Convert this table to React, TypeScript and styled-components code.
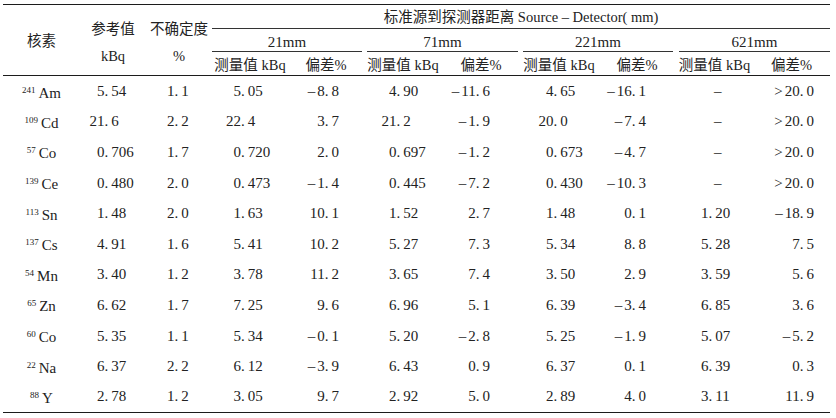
import React from 'react';
import styled, { createGlobalStyle } from 'styled-components';

const GlobalStyle = createGlobalStyle`
  html, body {
    margin: 0;
    padding: 0;
    background: #ffffff;
  }
  body {
    font-family: 'Liberation Serif', 'Noto Sans CJK SC', serif;
    color: #222222;
  }
`;

type Pair = [string, string];

interface Row {
  mass: string;
  el: string;
  ref: string;
  unc: string;
  values: Pair[];
}

const groups = ['21mm', '71mm', '221mm', '621mm'];

// where the decimal point sits inside each measured column
const measuredPoint = [29, 32.5, 33.5, 32.5];
// right padding of each deviation column
const biasPad = [25, 30, 30, 16];
// gaps of the short rules under each distance
const groupGap: Pair[] = [
  ['0', '2px'],
  ['3px', '2px'],
  ['3px', '3px'],
  ['3px', '0'],
];

const rows: Row[] = [
  { mass: '241', el: 'Am', ref: '5.54', unc: '1.1', values: [['5.05', '–8.8'], ['4.90', '–11.6'], ['4.65', '–16.1'], ['–', '>20.0']] },
  { mass: '109', el: 'Cd', ref: '21.6', unc: '2.2', values: [['22.4', '3.7'], ['21.2', '–1.9'], ['20.0', '–7.4'], ['–', '>20.0']] },
  { mass: '57', el: 'Co', ref: '0.706', unc: '1.7', values: [['0.720', '2.0'], ['0.697', '–1.2'], ['0.673', '–4.7'], ['–', '>20.0']] },
  { mass: '139', el: 'Ce', ref: '0.480', unc: '2.0', values: [['0.473', '–1.4'], ['0.445', '–7.2'], ['0.430', '–10.3'], ['–', '>20.0']] },
  { mass: '113', el: 'Sn', ref: '1.48', unc: '2.0', values: [['1.63', '10.1'], ['1.52', '2.7'], ['1.48', '0.1'], ['1.20', '–18.9']] },
  { mass: '137', el: 'Cs', ref: '4.91', unc: '1.6', values: [['5.41', '10.2'], ['5.27', '7.3'], ['5.34', '8.8'], ['5.28', '7.5']] },
  { mass: '54', el: 'Mn', ref: '3.40', unc: '1.2', values: [['3.78', '11.2'], ['3.65', '7.4'], ['3.50', '2.9'], ['3.59', '5.6']] },
  { mass: '65', el: 'Zn', ref: '6.62', unc: '1.7', values: [['7.25', '9.6'], ['6.96', '5.1'], ['6.39', '–3.4'], ['6.85', '3.6']] },
  { mass: '60', el: 'Co', ref: '5.35', unc: '1.1', values: [['5.34', '–0.1'], ['5.20', '–2.8'], ['5.25', '–1.9'], ['5.07', '–5.2']] },
  { mass: '22', el: 'Na', ref: '6.37', unc: '2.2', values: [['6.12', '–3.9'], ['6.43', '0.9'], ['6.37', '0.1'], ['6.39', '0.3']] },
  { mass: '88', el: 'Y', ref: '2.78', unc: '1.2', values: [['3.05', '9.7'], ['2.92', '5.0'], ['2.89', '4.0'], ['3.11', '11.9']] },
];

const colWidths = [77, 66, 66, 76, 76, 78, 78, 78, 78, 77, 77];

function Num({ value }: { value: string }) {
  const signed = value[0] === '–' || value[0] === '>';
  const body = signed ? value.slice(1) : value;
  const [int, frac] = body.split('.');
  return (
    <>
      {signed && <Sign>{value[0]}</Sign>}
      {int}
      {frac !== undefined && (
        <>
          <Point>.</Point>
          {frac}
        </>
      )}
    </>
  );
}

function Decimal({ value, point }: { value: string; point: number }) {
  if (value === '–') {
    return <Dash>–</Dash>;
  }
  const [int, frac] = value.split('.');
  return (
    <>
      <IntPart $width={point}>{int}</IntPart>
      <Point>.</Point>
      {frac}
    </>
  );
}

export default function App() {
  return (
    <>
      <GlobalStyle />
      <Page>
        <Table>
          <colgroup>
            {colWidths.map((w, i) => (
              <col key={i} style={{ width: w }} />
            ))}
          </colgroup>
          <thead>
            <tr>
              <HeadCell rowSpan={3} $pad={2}>
                核素
              </HeadCell>
              <HeadCell rowSpan={3} $pad={6}>
                参考值
                <br />
                kBq
              </HeadCell>
              <HeadCell rowSpan={3} $pad={6}>
                不确定度
                <br />%
              </HeadCell>
              <SpanHead colSpan={8}>
                标准源到探测器距离 Source – Detector( mm)
              </SpanHead>
            </tr>
            <tr>
              {groups.map((g, i) => (
                <GroupHead key={g} colSpan={2}>
                  <GroupLabel $ml={groupGap[i][0]} $mr={groupGap[i][1]}>
                    {g}
                  </GroupLabel>
                </GroupHead>
              ))}
            </tr>
            <tr>
              {groups.map((g) => (
                <React.Fragment key={g}>
                  <SubHead>测量值 kBq</SubHead>
                  <SubHead>偏差%</SubHead>
                </React.Fragment>
              ))}
            </tr>
          </thead>
          <tbody>
            {rows.map((r, ri) => (
              <BodyRow key={ri}>
                <NuclideCell>
                  <Mass>{r.mass}</Mass>
                  {r.el}
                </NuclideCell>
                <DecimalCell>
                  <Decimal value={r.ref} point={24.5} />
                </DecimalCell>
                <DecimalCell>
                  <Decimal value={r.unc} point={28.5} />
                </DecimalCell>
                {r.values.map(([m, b], gi) => (
                  <React.Fragment key={gi}>
                    <DecimalCell>
                      <Decimal value={m} point={measuredPoint[gi]} />
                    </DecimalCell>
                    <BiasCell $pad={biasPad[gi]}>
                      <Num value={b} />
                    </BiasCell>
                  </React.Fragment>
                ))}
              </BodyRow>
            ))}
          </tbody>
        </Table>
      </Page>
    </>
  );
}

const Page = styled.div`
  padding: 4px 6px 0 3px;
  width: 836px;
  height: 418px;
  box-sizing: border-box;
  overflow: hidden;
`;

const Table = styled.table`
  width: 827px;
  table-layout: fixed;
  border-collapse: collapse;
  border-top: 1.5px solid #1c1c1c;
  border-bottom: 1.5px solid #1c1c1c;
  font-size: 15px;
  line-height: 18px;
`;

const HeadCell = styled.th<{ $pad: number }>`
  font-weight: normal;
  font-size: 14.5px;
  line-height: 27px;
  padding: ${(p) => p.$pad}px 0 0;
  text-align: center;
  vertical-align: middle;
  border-bottom: 1.5px solid #1c1c1c;
  white-space: nowrap;
`;

const SpanHead = styled.th`
  font-weight: normal;
  font-size: 14.5px;
  height: 23px;
  padding: 0;
  text-align: center;
  vertical-align: middle;
  border-bottom: 1px solid #333333;
  white-space: nowrap;
`;

const GroupHead = styled.th`
  font-weight: normal;
  padding: 0;
  height: 23px;
  vertical-align: bottom;
`;

const GroupLabel = styled.div<{ $ml: string; $mr: string }>`
  margin: 0 ${(p) => p.$mr} 0 ${(p) => p.$ml};
  height: 22px;
  line-height: 27px;
  border-bottom: 1px solid #333333;
  font-size: 15px;
  text-align: center;
`;

const SubHead = styled.th`
  font-weight: normal;
  font-size: 14.5px;
  height: 20px;
  padding: 3px 0 0;
  text-align: center;
  vertical-align: middle;
  border-bottom: 1.5px solid #1c1c1c;
  white-space: nowrap;
`;

const BodyRow = styled.tr`
  height: 30.6px;
`;

const NuclideCell = styled.td`
  padding: 0;
  text-align: center;
  white-space: nowrap;
`;

const Mass = styled.sup`
  font-size: 9px;
  vertical-align: 5px;
  margin-right: 3px;
`;

const DecimalCell = styled.td`
  padding: 0;
  text-align: left;
  white-space: nowrap;
`;

const BiasCell = styled.td<{ $pad: number }>`
  padding: 0 ${(p) => p.$pad}px 0 0;
  text-align: right;
  white-space: nowrap;
`;

const IntPart = styled.span<{ $width: number }>`
  display: inline-block;
  width: ${(p) => p.$width}px;
  text-align: right;
`;

const Point = styled.span`
  margin-right: 3px;
`;

const Sign = styled.span`
  margin-right: 2px;
`;

const Dash = styled.span`
  display: inline-block;
  padding-left: 38px;
`;
